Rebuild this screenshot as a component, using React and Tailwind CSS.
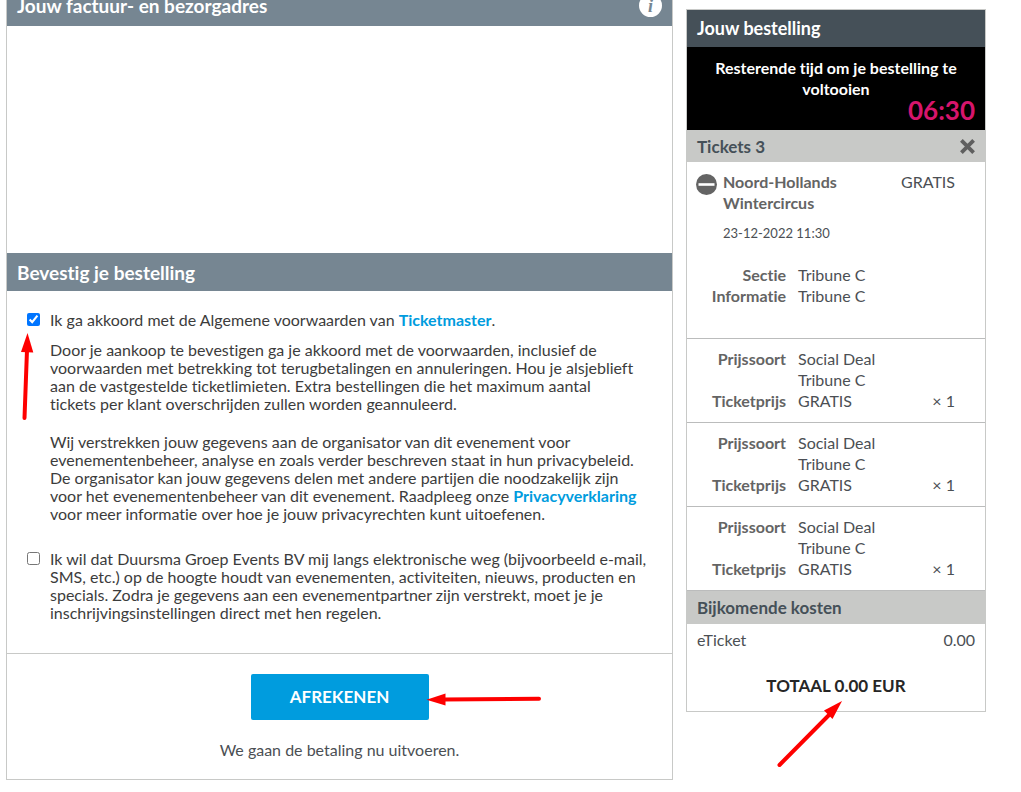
import React from 'react';

const prices = [1, 2, 3];

function SectionHeader({ children, className = '' }) {
  return (
    <div className={`flex items-center justify-between bg-[#768692] px-[10px] text-white ${className}`}>
      {children}
    </div>
  );
}

function DetailRow({ label, value, count }) {
  return (
    <div className="flex">
      <dt className="w-[90px] shrink-0 text-right font-bold text-[#646464]">{label}</dt>
      <dd className="ml-3 flex-1">{value}</dd>
      {count && <dd>{count}</dd>}
    </div>
  );
}

function Arrows() {
  return (
    <svg className="pointer-events-none absolute top-0 left-0" width="1021" height="792" fill="#fe0000" stroke="none" aria-hidden="true">
      <path d="M24.5 418 L27 350" stroke="#fe0000" strokeWidth="4" strokeLinecap="round" />
      <path d="M27.5 333 L33.3 352.5 L21 352 Z" />
      <path d="M539 698.7 L443 699.6" stroke="#fe0000" strokeWidth="4" strokeLinecap="round" />
      <path d="M426.5 699.8 L445.5 693.5 L445.5 705.5 Z" />
      <path d="M779.5 765 L830 714" stroke="#fe0000" strokeWidth="4" strokeLinecap="round" />
      <path d="M842 701 L824 710.5 L832.5 719 Z" />
    </svg>
  );
}

function Checkout() {
  return (
    <main className="-mt-4 min-w-0 flex-1 border border-[#c8c9c7] text-[#3c3c3c]">
      <SectionHeader className="h-[41px]">
        <h2 className="text-[19px] leading-6 font-bold">Jouw factuur- en bezorgadres</h2>
        <button type="button" aria-label="Informatie" className="flex size-[23px] items-center justify-center rounded-full bg-white font-['Liberation_Serif',serif] text-[18px] leading-none font-bold text-[#768692] italic">
          i
        </button>
      </SectionHeader>
      <div className="h-[227px]" />

      <SectionHeader className="h-[38px]">
        <h2 className="pt-[2px] text-[19px] leading-6 font-bold">Bevestig je bestelling</h2>
      </SectionHeader>

      <div className="border-b border-[#c8c9c7] px-5 pt-[20px] pb-[31px] leading-[18px] whitespace-nowrap">
        <div className="flex items-start">
          <input id="terms" type="checkbox" defaultChecked className="mt-[2px] mr-[10px] size-[13px] shrink-0" />
          <label htmlFor="terms">
            Ik ga akkoord met de Algemene voorwaarden van <a href="#" className="font-bold text-[#009cde]">Ticketmaster</a>.
          </label>
        </div>
        <p className="mt-3 ml-[23px]">
          Door je aankoop te bevestigen ga je akkoord met de voorwaarden, inclusief de<br />
          voorwaarden met betrekking tot terugbetalingen en annuleringen. Hou je alsjeblieft<br />
          aan de vastgestelde ticketlimieten. Extra bestellingen die het maximum aantal<br />
          tickets per klant overschrijden zullen worden geannuleerd.
        </p>
        <p className="mt-5 ml-[23px]">
          Wij verstrekken jouw gegevens aan de organisator van dit evenement voor<br />
          evenementenbeheer, analyse en zoals verder beschreven staat in hun privacybeleid.<br />
          De organisator kan jouw gegevens delen met andere partijen die noodzakelijk zijn<br />
          voor het evenementenbeheer van dit evenement. Raadpleeg onze <a href="#" className="font-bold text-[#009cde]">Privacyverklaring</a><br />
          voor meer informatie over hoe je jouw privacyrechten kunt uitoefenen.
        </p>
        <div className="mt-[27px] flex items-start">
          <input id="updates" type="checkbox" className="mt-[2px] mr-[10px] size-[13px] shrink-0" />
          <label htmlFor="updates">
            Ik wil dat Duursma Groep Events BV mij langs elektronische weg (bijvoorbeeld e-mail,<br />
            SMS, etc.) op de hoogte houdt van evenementen, activiteiten, nieuws, producten en<br />
            specials. Zodra je gegevens aan een evenementpartner zijn verstrekt, moet je je<br />
            inschrijvingsinstellingen direct met hen regelen.
          </label>
        </div>
      </div>

      <div className="flex flex-col items-center pt-5 pb-5 text-[#4b4f54]">
        <button type="button" className="h-[46px] w-[178px] rounded-xs bg-[#009cde] text-[17px] font-bold text-white">
          AFREKENEN
        </button>
        <p className="mt-5 leading-[19px]">We gaan de betaling nu uitvoeren.</p>
      </div>
    </main>
  );
}

function OrderSummary() {
  return (
    <aside className="mt-[9px] w-[300px] shrink-0 border border-[#c8c9c7] leading-[21px] text-[#4b4f54]">
      <h2 className="flex h-[37px] items-center bg-[#455058] px-[10px] text-[18px] font-bold text-white">Jouw bestelling</h2>
      <div className="h-[83px] bg-black px-[10px] pt-[10px] font-bold text-white">
        <p className="text-center">Resterende tijd om je bestelling te<br />voltooien</p>
        <p className="text-right text-[26px] leading-[22px] text-[#d6156c]">06:30</p>
      </div>
      <div className="flex h-8 items-center justify-between bg-[#c8c9c7] px-[10px]">
        <h3 className="text-[17px] font-bold text-[#455058]">Tickets 3</h3>
        <button type="button" aria-label="Verwijderen">
          <svg width="15" height="15" viewBox="0 0 15 15" stroke="#5f5f5f" strokeWidth="3.8">
            <path d="M1.4 1.4 L13.6 13.6 M13.6 1.4 L1.4 13.6" />
          </svg>
        </button>
      </div>

      <section className="border-b border-[#bbbcbc] pt-[9px] pr-[30px] pb-8 pl-[9px]">
        <div className="flex items-start">
          <button type="button" aria-label="Inklappen" className="mt-[3px]">
            <svg width="21" height="21" viewBox="0 0 21 21">
              <circle cx="10.5" cy="10.5" r="10.5" fill="#646464" />
              <path d="M2.5 10.5 H18.5" stroke="#fff" strokeWidth="2.6" />
            </svg>
          </button>
          <h4 className="ml-[6px] flex-1 font-bold text-[#646464]">Noord-Hollands<br />Wintercircus</h4>
          <span>GRATIS</span>
        </div>
        <p className="mt-[10px] ml-[27px] text-[13px]">23-12-2022 11:30</p>
        <dl className="mt-5">
          <DetailRow label="Sectie" value="Tribune C" />
          <DetailRow label="Informatie" value="Tribune C" />
        </dl>
      </section>

      {prices.map((id) => (
        <dl key={id} className="border-b border-[#bbbcbc] pt-[9px] pr-[30px] pb-[11px] pl-[9px]">
          <DetailRow label="Prijssoort" value={<>Social Deal<br />Tribune C</>} />
          <DetailRow label="Ticketprijs" value="GRATIS" count="× 1" />
        </dl>
      ))}

      <h3 className="flex h-[33px] items-center bg-[#c8c9c7] px-[10px] text-[17px] font-bold text-[#455058]">Bijkomende kosten</h3>
      <div className="flex justify-between px-[10px] pt-[5px]">
        <span>eTicket</span>
        <span>0.00</span>
      </div>
      <p className="pt-[25px] pb-[15px] text-center text-[17px] font-bold text-[#262626]">TOTAAL 0.00 EUR</p>
    </aside>
  );
}

export default function App() {
  return (
    <div className="relative min-h-screen overflow-hidden bg-white font-[Lato,sans-serif] text-[16px] [font-variant-ligatures:none]">
      <div className="flex items-start gap-[13px] pr-[35px] pl-[6px]">
        <Checkout />
        <OrderSummary />
      </div>
      <Arrows />
    </div>
  );
}
